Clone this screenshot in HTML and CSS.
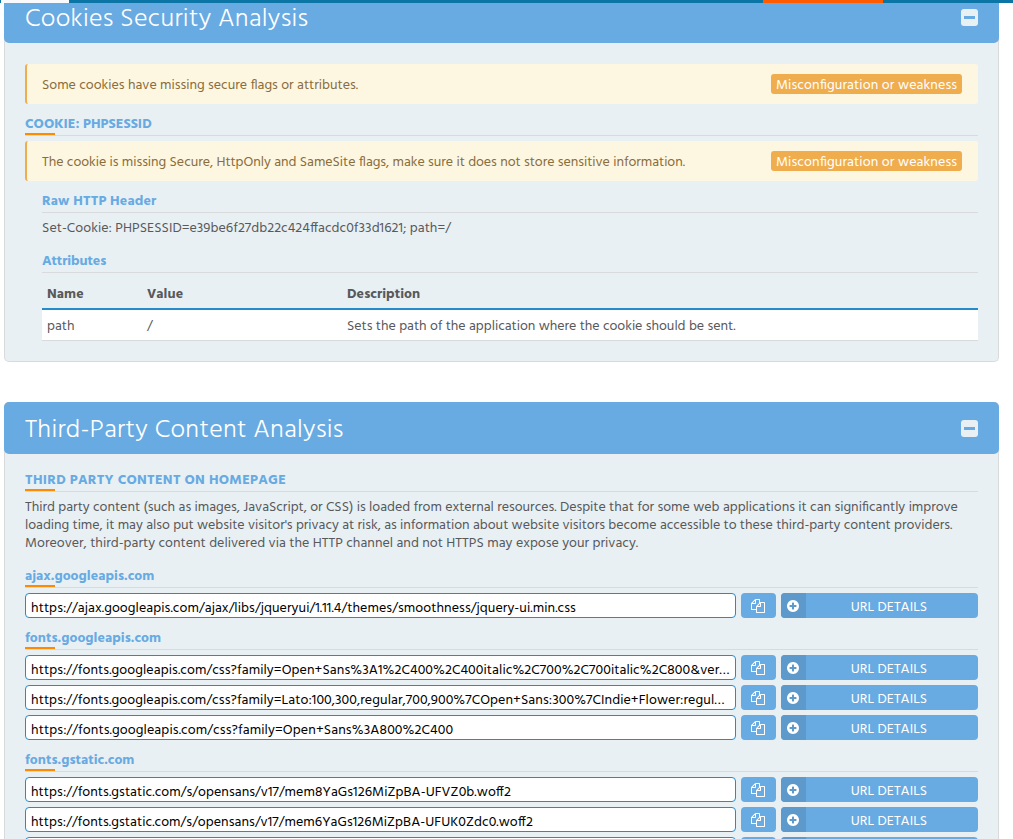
FILE: index.html
```html
<!DOCTYPE html>
<html lang="en">
<head>
<meta charset="utf-8">
<title>Website Security Test</title>
<link rel="stylesheet" href="styles.css">
</head>
<body>
<svg class="defs" aria-hidden="true">
  <symbol id="copy" viewBox="0 0 1792 1792"><path d="M1696 384q40 0 68 28t28 68v1216q0 40-28 68t-68 28h-960q-40 0-68-28t-28-68v-288h-544q-40 0-68-28t-28-68v-672q0-40 20-88t48-76l408-408q28-28 76-48t88-20h416q40 0 68 28t28 68v328q68-40 128-40h416zm-544 213l-299 299h299v-299zm-640-384l-299 299h299v-299zm196 647l316-316v-416h-384v416q0 40-28 68t-68 28h-416v640h512v-256q0-40 20-88t48-76zm956 804v-1152h-384v416q0 40-28 68t-68 28h-416v640h896z"/></symbol>
  <symbol id="plus" viewBox="0 0 1792 1792"><path d="M1344 960v-128q0-26-19-45t-45-19h-256v-256q0-26-19-45t-45-19h-128q-26 0-45 19t-19 45v256h-256q-26 0-45 19t-19 45v128q0 26 19 45t45 19h256v256q0 26 19 45t45 19h128q26 0 45-19t19-45v-256h256q26 0 45-19t19-45zm320-64q0 209-103 385.500t-279.500 279.500-385.500 103-385.500-103-279.500-279.500-103-385.500 103-385.500 279.500-279.500 385.500-103 385.500 103 279.500 279.500 103 385.500z"/></symbol>
</svg>

<div class="topbar"><i class="bar-edge"></i><i class="bar-logo"></i><i class="bar-fill"></i><i class="bar-accent"></i><i class="bar-rest"></i></div>

<main class="page">
  <section class="panel">
    <header class="panel-head"><h2 class="title">Cookies Security Analysis</h2><span class="collapse"></span></header>
    <div class="panel-body cookies">
      <div class="alert"><span class="t-flat">Some cookies have missing secure flags or attributes.</span><span class="badge">Misconfiguration or weakness</span></div>
      <h3 class="heading marked">COOKIE: PHPSESSID</h3>
      <div class="alert alert-next"><span class="t-tight">The cookie is missing Secure, HttpOnly and SameSite flags, make sure it does not store sensitive information.</span><span class="badge">Misconfiguration or weakness</span></div>
      <div class="indent">
        <h4 class="heading t-raw">Raw HTTP Header</h4>
        <p class="raw">Set-Cookie: PHPSESSID=e39be6f27db22c424ffacdc0f33d1621; path=/</p>
        <h4 class="heading t-attr">Attributes</h4>
        <div class="table">
          <div class="row row-head"><span>Name</span><span>Value</span><span>Description</span></div>
          <div class="row"><span>path</span><span>/</span><span class="t-sets">Sets the path of the application where the cookie should be sent.</span></div>
        </div>
      </div>
    </div>
  </section>

  <section class="panel">
    <header class="panel-head"><h2 class="title">Third-Party Content Analysis</h2><span class="collapse"></span></header>
    <div class="panel-body third">
      <h3 class="heading marked t-caps">THIRD PARTY CONTENT ON HOMEPAGE</h3>
      <p class="intro">Third party content (such as images, JavaScript, or CSS) is loaded from external resources. Despite that for some web applications it can significantly improve<br><span class="t-load">loading time, it may also put website visitor's privacy at risk, as information about website visitors become accessible to these third-party content providers.</span><br><span class="t-more">Moreover, third-party content delivered via the HTTP channel and not HTTPS may expose your privacy.</span></p>

      <h4 class="heading marked">ajax.googleapis.com</h4>
      <div class="urls">
        <div class="url"><div class="field t-08">https://ajax.googleapis.com/ajax/libs/jqueryui/1.11.4/themes/smoothness/jquery-ui.min.css</div><div class="copy"><svg class="icon"><use href="#copy"/></svg></div><div class="details"><span class="plus"><svg class="icon"><use href="#plus"/></svg></span><span class="label">URL DETAILS</span></div></div>
      </div>

      <h4 class="heading marked">fonts.googleapis.com</h4>
      <div class="urls">
        <div class="url"><div class="field t-long">https://fonts.googleapis.com/css?family=Open+Sans%3A1%2C400%2C400italic%2C700%2C700italic%2C800&amp;ver…</div><div class="copy"><svg class="icon"><use href="#copy"/></svg></div><div class="details"><span class="plus"><svg class="icon"><use href="#plus"/></svg></span><span class="label">URL DETAILS</span></div></div>
        <div class="url"><div class="field t-lato">https://fonts.googleapis.com/css?family=Lato:100,300,regular,700,900%7COpen+Sans:300%7CIndie+Flower:regul…</div><div class="copy"><svg class="icon"><use href="#copy"/></svg></div><div class="details"><span class="plus"><svg class="icon"><use href="#plus"/></svg></span><span class="label">URL DETAILS</span></div></div>
        <div class="url"><div class="field t-12">https://fonts.googleapis.com/css?family=Open+Sans%3A800%2C400</div><div class="copy"><svg class="icon"><use href="#copy"/></svg></div><div class="details"><span class="plus"><svg class="icon"><use href="#plus"/></svg></span><span class="label">URL DETAILS</span></div></div>
      </div>

      <h4 class="heading marked">fonts.gstatic.com</h4>
      <div class="urls">
        <div class="url"><div class="field t-07">https://fonts.gstatic.com/s/opensans/v17/mem8YaGs126MiZpBA-UFVZ0b.woff2</div><div class="copy"><svg class="icon"><use href="#copy"/></svg></div><div class="details"><span class="plus"><svg class="icon"><use href="#plus"/></svg></span><span class="label">URL DETAILS</span></div></div>
        <div class="url"><div class="field t-06">https://fonts.gstatic.com/s/opensans/v17/mem6YaGs126MiZpBA-UFUK0Zdc0.woff2</div><div class="copy"><svg class="icon"><use href="#copy"/></svg></div><div class="details"><span class="plus"><svg class="icon"><use href="#plus"/></svg></span><span class="label">URL DETAILS</span></div></div>
        <div class="url"><div class="field"></div><div class="copy"></div><div class="details"><span class="plus"></span></div></div>
      </div>
    </div>
  </section>
</main>
</body>
</html>
```
FILE: styles.css
```css
* { box-sizing: border-box; }
html, body { height: 839px; overflow: hidden; }
body {
  margin: 0;
  background: #fff;
  color: #58595b;
  font: 400 14px/18px Hind, "Noto Sans", sans-serif;
  font-feature-settings: "liga" 1, "clig" 1;
}
h2, h3, h4, p { margin: 0; font-size: 14px; }
.defs { display: none; }
.icon { width: 14px; height: 14px; fill: #fff; display: block; }

/* fixed navigation edge over the scrolled page */
.topbar { position: fixed; top: 0; left: 0; width: 1013px; height: 3px; display: flex; z-index: 2; background: #0b76a6; }
.bar-edge { width: 1px; }
.bar-logo { width: 68px; background: #f8fafb; }
.bar-fill { width: 694px; }
.bar-accent { width: 120px; background: #ff5c00; }

.page { display: flex; flex-direction: column; gap: 40px; width: 995px; margin: -9px 0 0 4px; }
.panel { background: #e8f0f4; border: 1px solid #d9dadc; border-top: 0; border-radius: 5px; }
.panel-head {
  display: flex; justify-content: space-between; align-items: center;
  height: 52px; margin: 0 -1px; padding: 0 21px;
  background: #68aae2; border-radius: 5px;
}
.title { color: #fff; font-size: 26px; font-weight: 300; line-height: 40px; letter-spacing: .28px; padding-top: 6px; }
.collapse { display: flex; align-items: center; justify-content: center; width: 17px; height: 17px; border-radius: 3px; background: #e8f0f4; }
.collapse::before { content: ""; width: 11px; height: 3px; background: #68aae2; }
.panel-body { padding: 0 20px; }
.cookies { padding-top: 21px; padding-bottom: 20px; }
.third { padding-top: 6px; padding-bottom: 20px; }

.alert {
  display: flex; justify-content: space-between; align-items: center;
  height: 40px; padding: 0 16px 0 15px;
  background: #fdf7e2; border-left: 2px solid #f0ad4e; border-radius: 3px; color: #8a6d3b;
}
.alert-next { margin-top: 5px; }
.alert > span:first-child { padding-top: 3px; }
.badge { height: 20px; padding: 2px 5px 0; border-radius: 3px; background: #f0ad4e; color: #fff; letter-spacing: .1px; line-height: 20px; width: 191px; white-space: nowrap; }

.heading {
  position: relative; height: 32px; padding-top: 12px;
  border-bottom: 1px solid #d9dadc;
  color: #68aae2; font-weight: 700; letter-spacing: .03px;
}
.marked::after { content: ""; position: absolute; left: 0; bottom: 0; width: 30px; height: 2px; background: #ff8a00; }
.indent { padding-left: 17px; }
.raw { padding: 7px 0 3px; letter-spacing: .04px; }

.row { display: grid; grid-template-columns: 100px 200px 1fr; padding: 8px 5px 0; height: 31px; background: #fff; border-bottom: 1px solid #d9dadc; }
.row-head { height: 37px; padding-top: 13px; background: none; border-bottom: 2px solid #268bc9; font-weight: 700; letter-spacing: .06px; }

.intro { padding: 7px 0 3px; letter-spacing: -.027px; white-space: nowrap; }
.urls { display: flex; flex-direction: column; gap: 5px; padding-top: 5px; }
.url { display: grid; grid-template-columns: 711px 35px 197px; gap: 5px; height: 25px; }
.field { padding: 6px 5px 0; line-height: 17px; background: #fff; border: 1px solid #268bc9; border-radius: 4px; color: #000; white-space: nowrap; overflow: hidden; }
.copy { display: flex; align-items: center; padding-left: 10px; background: #68aae2; border-radius: 4px; }
.details { display: flex; background: #68aae2; border-radius: 4px; overflow: hidden; color: #fff; }
.plus { display: flex; align-items: center; padding-left: 5px; width: 25px; background: #5d99cb; }
.label { flex: 1; padding: 6px 6px 0 0; text-align: center; }

/* tracking per text run */
.t-flat { letter-spacing: -.02px; }
.t-tight { letter-spacing: -.05px; }
.t-sets { letter-spacing: -.035px; }
.t-raw { letter-spacing: .14px; }
.t-attr { letter-spacing: -.1px; }
.t-caps { letter-spacing: .27px; }
.t-load { letter-spacing: -.045px; }
.t-more { letter-spacing: .005px; }
.t-long { letter-spacing: .08px; }
.t-lato { letter-spacing: .077px; }
.t-12 { letter-spacing: .11px; }
.t-08 { letter-spacing: .075px; }
.t-07 { letter-spacing: .06px; }
.t-06 { letter-spacing: .055px; }
```
